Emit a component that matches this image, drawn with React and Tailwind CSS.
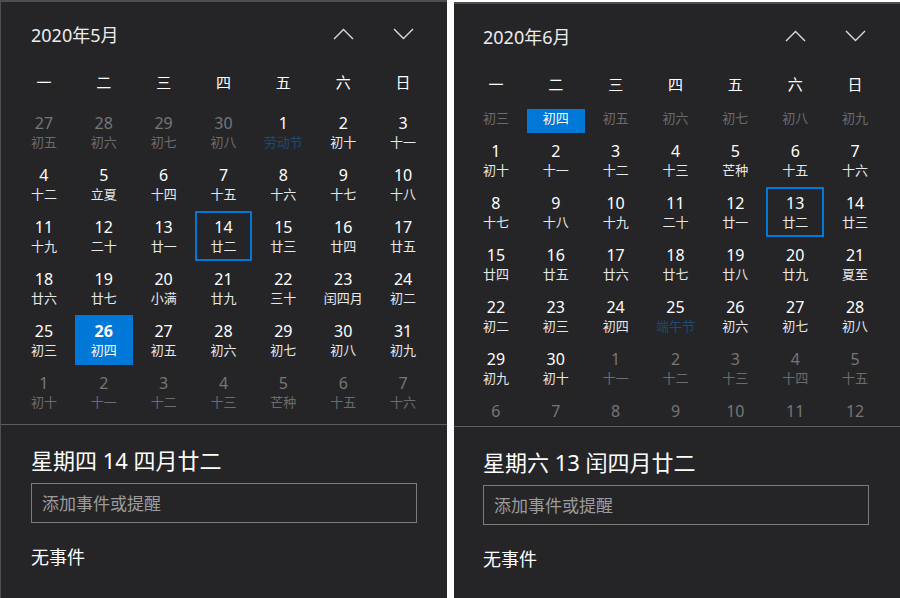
import React from 'react';

const mk = (row, flags = {}) =>
    row.map(([n, l], i) => ({ n, l, ...(flags[i] || {}) }));

const dimAll = (row) => row.map((c) => ({ ...c, dim: true }));

const mayRows = [
    [
        ...dimAll(mk([[27, '初五'], [28, '初六'], [29, '初七'], [30, '初八']])),
        ...mk([[1, '劳动节'], [2, '初十'], [3, '十一']], { 0: { fest: true } }),
    ],
    mk([[4, '十二'], [5, '立夏'], [6, '十四'], [7, '十五'], [8, '十六'], [9, '十七'], [10, '十八']]),
    mk([[11, '十九'], [12, '二十'], [13, '廿一'], [14, '廿二'], [15, '廿三'], [16, '廿四'], [17, '廿五']], { 3: { today: true } }),
    mk([[18, '廿六'], [19, '廿七'], [20, '小满'], [21, '廿九'], [22, '三十'], [23, '闰四月'], [24, '初二']]),
    mk([[25, '初三'], [26, '初四'], [27, '初五'], [28, '初六'], [29, '初七'], [30, '初八'], [31, '初九']], { 1: { sel: true } }),
    dimAll(mk([[1, '初十'], [2, '十一'], [3, '十二'], [4, '十三'], [5, '芒种'], [6, '十五'], [7, '十六']])),
];

// first row is scrolled up under the weekday header: only the lunar line shows
// last row is cut by the separator: only the day number shows
const juneRows = [
    mk([['', '初三'], ['', '初四'], ['', '初五'], ['', '初六'], ['', '初七'], ['', '初八'], ['', '初九']]).map((c, i) =>
        i === 1 ? { ...c, sel: true } : { ...c, dim: true }
    ),
    mk([[1, '初十'], [2, '十一'], [3, '十二'], [4, '十三'], [5, '芒种'], [6, '十五'], [7, '十六']]),
    mk([[8, '十七'], [9, '十八'], [10, '十九'], [11, '二十'], [12, '廿一'], [13, '廿二'], [14, '廿三']], { 5: { today: true } }),
    mk([[15, '廿四'], [16, '廿五'], [17, '廿六'], [18, '廿七'], [19, '廿八'], [20, '廿九'], [21, '夏至']]),
    mk([[22, '初二'], [23, '初三'], [24, '初四'], [25, '端午节'], [26, '初六'], [27, '初七'], [28, '初八']], { 3: { fest: true } }),
    [
        ...mk([[29, '初九'], [30, '初十']]),
        ...dimAll(mk([[1, '十一'], [2, '十二'], [3, '十三'], [4, '十四'], [5, '十五']])),
    ],
    dimAll(mk([[6, ''], [7, ''], [8, ''], [9, ''], [10, ''], [11, ''], [12, '']])),
];

const weekdays = ['一', '二', '三', '四', '五', '六', '日'];

const Chevron = ({ up }) => (
    <svg width="21" height="12" viewBox="0 0 21 12" fill="none" stroke="#dcdcdc" strokeWidth="1.4">
        <path d={up ? 'M1 11 L10.5 1.5 L20 11' : 'M1 1 L10.5 10.5 L20 1'} />
    </svg>
);

const DayCell = ({ d }) => {
    const box = d.sel
        ? 'bg-[#0078d7]'
        : d.today
            ? 'border-2 border-[#0078d7]'
            : '';
    const numCls = d.sel
        ? 'text-white font-bold'
        : d.dim
            ? 'text-[#767676]'
            : 'text-white';
    const lunarCls = d.sel
        ? 'text-white'
        : d.fest
            ? 'text-[#1b4a78]'
            : d.dim
                ? 'text-[#6c6c6c]'
                : 'text-[#e8e8e8]';
    return (
        <div className={`h-[50px] flex flex-col items-center ${box} ${d.today ? 'pt-[4px]' : 'pt-[6px]'}`}>
            <span className={`h-[20px] text-[16px] leading-[20px] ${numCls}`}>{d.n}</span>
            <span className={`h-[18px] text-[13px] leading-[18px] ${lunarCls}`}>{d.l}</span>
        </div>
    );
};

const Panel = ({ title, rows, offset, heading, isRight }) => (
    <div
        className={
            isRight
                ? 'w-[446px] h-[596px] mt-[2px] bg-[#252528] border-t-2 border-[#4f4f52] flex flex-col shrink-0'
                : 'w-[447px] h-[598px] bg-[#252528] border-t-2 border-l border-[#4f4f52] flex flex-col shrink-0'
        }
    >
        <div className={isRight ? 'pl-[13px]' : 'pl-[14px]'}>
            <div className="w-[417px] grid grid-cols-7 gap-x-[2px] h-[66px] items-center">
                <div className="col-span-5 pl-[16px] text-[18px] text-[#ececec]">{title}</div>
                <div className="flex justify-center -mt-[2px]"><Chevron up /></div>
                <div className="flex justify-center -mt-[2px]"><Chevron /></div>
            </div>
            <div className="w-[417px] grid grid-cols-7 gap-x-[2px] h-[28px] items-center">
                {weekdays.map((w) => (
                    <div key={w} className="text-center text-[15px] text-white">{w}</div>
                ))}
            </div>
            <div className="w-[417px] h-[317px] mt-[11px] overflow-hidden">
                <div className={`grid grid-cols-7 gap-x-[2px] gap-y-[2px] ${offset}`}>
                    {rows.flat().map((d, i) => (
                        <DayCell key={i} d={d} />
                    ))}
                </div>
            </div>
        </div>
        <div className="h-px bg-[#5c5c5e]" />
        <div className={isRight ? 'pl-[29px]' : 'pl-[30px]'}>
            <div className="mt-[20px] text-[22px] leading-[30px] text-white">{heading}</div>
            <input
                className="mt-[8px] w-[386px] h-[40px] border border-[#7c7c7c] bg-transparent pl-[10px] text-[17px] text-white outline-none placeholder:text-[#9b9b9b]"
                placeholder="添加事件或提醒"
                readOnly
            />
            <div className="mt-[21px] text-[18px] leading-[26px] text-white">无事件</div>
        </div>
    </div>
);

export default function App() {
    return (
        <div className="w-[900px] h-[598px] bg-white flex gap-[7px] overflow-hidden font-['Noto_Sans','Noto_Sans_CJK_SC',sans-serif]">
            <Panel title="2020年5月" rows={mayRows} offset="mt-0" heading="星期四 14 四月廿二" />
            <Panel title="2020年6月" rows={juneRows} offset="-mt-[26px]" heading="星期六 13 闰四月廿二" isRight />
        </div>
    );
}
